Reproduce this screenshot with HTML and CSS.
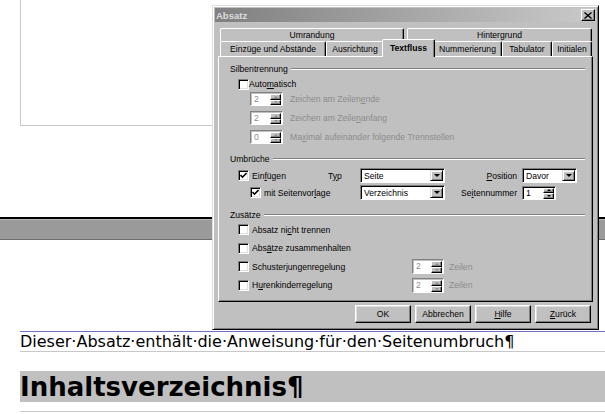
FILE: index.html
```html
<!DOCTYPE html>
<html lang="de">
<head>
    <meta charset="UTF-8">
    <meta name="viewport" content="width=device-width, initial-scale=1.0">
    <title>Absatz</title>
    <link rel="stylesheet" href="styles.css">
</head>
<body>
    <div class="doc">
        <div class="page-end"></div>
        <div class="page-break"></div>
        <p class="para">Dieser·Absatz·enthält·die·Anweisung·für·den·Seitenumbruch¶</p>
        <h1 class="heading">Inhaltsverzeichnis¶</h1>
        <div class="para-end"></div>
    </div>

    <div class="dialog">
        <div class="titlebar">
            <span class="title">Absatz</span>
            <span class="close-btn">
                <svg width="8" height="7" viewBox="0 0 8 7"><path d="M0.5 0.5 L7.5 6.5 M7.5 0.5 L0.5 6.5" stroke="#000" stroke-width="1.4" fill="none"/></svg>
            </span>
        </div>

        <div class="dialog-body">
            <div class="tab-row back">
                <div class="tab t-umrandung">Umrandung</div>
                <div class="tab t-hintergrund">Hintergrund</div>
            </div>
            <div class="tab-row front">
                <div class="tab t-einzuege">Einzüge und Abstände</div>
                <div class="tab t-ausrichtung">Ausrichtung</div>
                <div class="tab t-textfluss active">Textfluss</div>
                <div class="tab t-nummerierung">Nummerierung</div>
                <div class="tab t-tabulator">Tabulator</div>
                <div class="tab t-initialen">Initialen</div>
            </div>

            <div class="panel">
                <!-- Silbentrennung -->
                <div class="group-head">Silbentrennung</div>
                <div class="row row-auto">
                    <span class="cb"></span><span class="lbl">Auto<u>m</u>atisch</span>
                </div>
                <div class="row spin-row">
                    <span class="spin off"><span class="spin-val">2</span><span class="spin-btns"><span class="spin-btn up"></span><span class="spin-btn down"></span></span></span>
                    <span class="lbl off">Zeichen am Zeilen<u>e</u>nde</span>
                </div>
                <div class="row spin-row">
                    <span class="spin off"><span class="spin-val">2</span><span class="spin-btns"><span class="spin-btn up"></span><span class="spin-btn down"></span></span></span>
                    <span class="lbl off">Zeichen am Zeile<u>n</u>anfang</span>
                </div>
                <div class="row spin-row">
                    <span class="spin off"><span class="spin-val">0</span><span class="spin-btns"><span class="spin-btn up"></span><span class="spin-btn down"></span></span></span>
                    <span class="lbl off">Ma<u>x</u>imal aufeinander folgende Trennstellen</span>
                </div>

                <!-- Umbrüche -->
                <div class="group-head gap">Umbrüche</div>
                <div class="break-grid">
                    <div class="cell-check">
                        <span class="cb"><svg width="7" height="7" viewBox="0 0 7 7"><path d="M0.5 3 L2.5 5.2 L6.5 1" stroke="#000" stroke-width="1.6" fill="none"/></svg></span>
                        <span class="lbl">Ein<u>f</u>ügen</span>
                    </div>
                    <span class="lbl">T<u>y</u>p</span>
                    <span class="select sel-wide"><span class="select-val">Seite</span><span class="select-btn"></span></span>
                    <span class="lbl right"><u>P</u>osition</span>
                    <span class="select sel-short"><span class="select-val">Davor</span><span class="select-btn"></span></span>

                    <div class="cell-check sub">
                        <span class="cb"><svg width="7" height="7" viewBox="0 0 7 7"><path d="M0.5 3 L2.5 5.2 L6.5 1" stroke="#000" stroke-width="1.6" fill="none"/></svg></span>
                        <span class="lbl">mit Seitenvor<u>l</u>age</span>
                    </div>
                    <span class="select sel-wide"><span class="select-val">Verzeichnis</span><span class="select-btn"></span></span>
                    <span class="lbl right">Se<u>i</u>tennummer</span>
                    <span class="spin page-no"><span class="spin-val">1</span><span class="spin-btns"><span class="spin-btn up"></span><span class="spin-btn down"></span></span></span>
                </div>

                <!-- Zusätze -->
                <div class="group-head gap">Zusätze</div>
                <div class="extra-grid">
                    <div class="cell-check"><span class="cb"></span><span class="lbl">Absatz ni<u>c</u>ht trennen</span></div>
                    <span></span><span></span>
                    <div class="cell-check"><span class="cb"></span><span class="lbl">Abs<u>ä</u>tze zusammenhalten</span></div>
                    <span></span><span></span>
                    <div class="cell-check"><span class="cb"></span><span class="lbl">Schusterjungenregelung</span></div>
                    <span class="spin off"><span class="spin-val">2</span><span class="spin-btns"><span class="spin-btn up"></span><span class="spin-btn down"></span></span></span>
                    <span class="lbl off">Zeilen</span>
                    <div class="cell-check"><span class="cb"></span><span class="lbl">H<u>u</u>renkinderregelung</span></div>
                    <span class="spin off"><span class="spin-val">2</span><span class="spin-btns"><span class="spin-btn up"></span><span class="spin-btn down"></span></span></span>
                    <span class="lbl off">Zeilen</span>
                </div>
            </div>

            <div class="buttons">
                <span class="btn">OK</span>
                <span class="btn">Abbrechen</span>
                <span class="btn"><u>H</u>ilfe</span>
                <span class="btn"><u>Z</u>urück</span>
            </div>
        </div>
    </div>
</body>
</html>
```

FILE: styles.css
```css
body {
    margin: 0;
    background: #ffffff;
    font-family: "DejaVu Sans", sans-serif;
    color: #000000;
}

/* Dokument hinter dem Dialog */
.doc {
    width: 605px;
}
.page-end {
    margin-left: 20px;
    width: 570px;
    height: 125px;
    border-left: 1px solid #c8c8c8;
    border-bottom: 1px solid #c8c8c8;
}
.page-break {
    margin-top: 91px;
    height: 20px;
    border-top: 2px solid #000000;
    border-bottom: 1px solid #6e6e6e;
    background: #9a9a9a;
    box-shadow: inset 0 1px #b8b8b8;
}
.para {
    margin: 91px 0 0 20px;
    height: 19px;
    line-height: 19px;
    font-size: 16px;
    border-top: 1px solid #7070c8;
    border-bottom: 1px solid #c8c8c8;
    white-space: nowrap;
}
.heading {
    margin: 19px 0 0 20px;
    height: 31px;
    line-height: 33px;
    font-size: 26px;
    font-weight: bold;
    background: #c0c0c0;
    white-space: nowrap;
    overflow: hidden;
}
.para-end {
    margin: 9px 0 0 20px;
    border-top: 1px solid #c8c8c8;
}

/* Dialogfenster */
.dialog {
    position: absolute;
    left: 212px;
    top: 5px;
    width: 387px;
    height: 325px;
    box-sizing: border-box;
    padding: 2px;
    background: #c0c0c0;
    border: 1px solid;
    border-color: #dfdfdf #000000 #000000 #dfdfdf;
    box-shadow: inset 1px 1px #ffffff, inset -1px -1px #808080;
    font-family: "Liberation Sans", Arial, sans-serif;
    font-size: 8.6px;
    color: #000000;
}
.titlebar {
    height: 14px;
    display: flex;
    align-items: center;
    justify-content: space-between;
    padding: 0 1px 0 1px;
    background: linear-gradient(to right, #808080, #cacaca);
}
.title {
    font-size: 9.5px;
    font-weight: bold;
    color: #dcdcdc;
}
.close-btn {
    width: 14px;
    height: 12px;
    box-sizing: border-box;
    display: flex;
    align-items: center;
    justify-content: center;
    background: #c0c0c0;
    border: 1px solid;
    border-color: #ffffff #000000 #000000 #ffffff;
    box-shadow: inset -1px -1px #808080;
}
.dialog-body {
    padding: 6px 3px 0 3px;
}

/* Registerkarten */
.tab-row {
    display: flex;
    padding-left: 2px;
}
.tab-row.back {
    height: 13px;
    gap: 3px;
}
.tab-row.front {
    height: 15px;
}
.tab {
    box-sizing: border-box;
    border: 1px solid;
    border-bottom: none;
    border-color: #ffffff #000000 transparent #ffffff;
    border-radius: 2px 2px 0 0;
    box-shadow: inset -1px 0 #808080;
    text-align: center;
    white-space: nowrap;
}
.back .tab {
    line-height: 12px;
}
.front .tab {
    line-height: 13px;
    padding-top: 1px;
}
.tab.active {
    position: relative;
    z-index: 1;
    margin: -2px -2px -1px -2px;
    height: 18px;
    padding-top: 2px;
    background: #c0c0c0;
    font-weight: bold;
}
.t-umrandung { width: 184px; }
.t-hintergrund { width: 185px; }
.t-einzuege { width: 106px; }
.t-ausrichtung { width: 58px; }
.t-textfluss { width: 53px; }
.t-nummerierung { width: 69px; }
.t-tabulator { width: 50px; }
.t-initialen { width: 40px; }

.panel {
    height: 246px;
    box-sizing: border-box;
    padding: 5px 7px 0 11px;
    border: 1px solid;
    border-color: #ffffff #000000 #000000 #ffffff;
    box-shadow: inset -1px -1px #808080;
}

/* Gruppen */
.group-head {
    height: 14px;
    display: flex;
    align-items: center;
}
.group-head::after {
    content: "";
    flex: 1;
    margin-left: 3px;
    border-top: 1px solid #808080;
    border-bottom: 1px solid #ffffff;
}
.group-head.gap {
    margin-top: 8px;
}
.row {
    display: flex;
    align-items: center;
    white-space: nowrap;
}
.row-auto {
    height: 14px;
    margin-top: 1px;
    padding-left: 8px;
}
.spin-row {
    height: 14px;
    margin-top: 5px;
    padding-left: 20px;
}
.row-auto + .spin-row {
    margin-top: 1px;
}
.spin-row .lbl {
    margin-left: 7px;
}
.lbl {
    white-space: nowrap;
}
.lbl.off {
    color: #8c8c8c;
}
.lbl.right {
    justify-self: end;
    padding-right: 5px;
}

.cell-check {
    display: flex;
    align-items: center;
    padding-left: 8px;
}
.cell-check.sub {
    grid-column: 1 / 3;
    padding-left: 20px;
}
.cell-check .lbl {
    margin-left: 3px;
}

/* Kontrollkästchen */
.cb {
    width: 11px;
    height: 11px;
    box-sizing: border-box;
    display: flex;
    align-items: center;
    justify-content: center;
    background: #ffffff;
    border: 1px solid;
    border-color: #808080 #ffffff #ffffff #808080;
    box-shadow: inset 1px 1px #000000, inset -1px -1px #dfdfdf;
}

/* Drehfeld */
.spin {
    width: 33px;
    height: 14px;
    box-sizing: border-box;
    display: flex;
    background: #ffffff;
    border: 1px solid;
    border-color: #808080 #ffffff #ffffff #808080;
    box-shadow: inset 1px 1px #000000;
}
.spin.off {
    box-shadow: inset 1px 1px #c0c0c0;
}
.spin-val {
    flex: 1;
    padding: 1px 0 0 3px;
    line-height: 11px;
}
.spin.off .spin-val {
    color: #8c8c8c;
}
.spin-btns {
    width: 11px;
    display: flex;
    flex-direction: column;
    padding: 1px 1px 0 0;
}
.spin-btn {
    flex: 1;
    box-sizing: border-box;
    display: flex;
    align-items: center;
    justify-content: center;
    background: #c0c0c0;
    border: 1px solid;
    border-color: #ffffff #000000 #000000 #ffffff;
    box-shadow: inset -1px -1px #808080;
}
.spin-btn::before {
    content: "";
    border-left: 2px solid transparent;
    border-right: 2px solid transparent;
}
.spin-btn.up::before {
    border-bottom: 2px solid #000000;
}
.spin-btn.down::before {
    border-top: 2px solid #000000;
}
.spin.off .spin-btn.up::before {
    border-bottom-color: #8c8c8c;
}
.spin.off .spin-btn.down::before {
    border-top-color: #8c8c8c;
}
.spin.page-no {
    width: 34px;
}

/* Listenfeld */
.select {
    height: 15px;
    box-sizing: border-box;
    display: flex;
    background: #ffffff;
    border: 1px solid;
    border-color: #808080 #ffffff #ffffff #808080;
    box-shadow: inset 1px 1px #000000;
}
.sel-wide {
    width: 85px;
}
.sel-short {
    width: 55px;
}
.select-val {
    flex: 1;
    padding: 1px 0 0 3px;
    line-height: 12px;
}
.select-btn {
    width: 13px;
    margin: 1px 1px 1px 0;
    box-sizing: border-box;
    display: flex;
    align-items: center;
    justify-content: center;
    background: #c0c0c0;
    border: 1px solid;
    border-color: #dfdfdf #000000 #000000 #dfdfdf;
    box-shadow: inset 1px 1px #ffffff, inset -1px -1px #808080;
}
.select-btn::before {
    content: "";
    border-left: 3px solid transparent;
    border-right: 3px solid transparent;
    border-top: 3px solid #000000;
}

.break-grid {
    display: grid;
    grid-template-columns: 98px 32px 85px 77px 55px;
    grid-template-rows: 15px 15px;
    row-gap: 2px;
    margin-top: 2px;
    align-items: center;
}

.extra-grid {
    display: grid;
    grid-template-columns: 182px 32px auto;
    grid-template-rows: repeat(4, 15px);
    row-gap: 3.5px;
    align-items: center;
}
.extra-grid .spin {
    width: 32px;
    height: 15px;
}
.extra-grid .lbl.off {
    margin-left: 5px;
}

/* Schaltflächen */
.buttons {
    display: flex;
    justify-content: flex-end;
    gap: 4px;
    margin-top: 3px;
    padding-right: 2px;
}
.btn {
    width: 56px;
    height: 18px;
    box-sizing: border-box;
    display: flex;
    align-items: center;
    justify-content: center;
    background: #c0c0c0;
    border: 1px solid;
    border-color: #ffffff #000000 #000000 #ffffff;
    box-shadow: inset -1px -1px #808080, inset 1px 1px #dfdfdf;
}
```
